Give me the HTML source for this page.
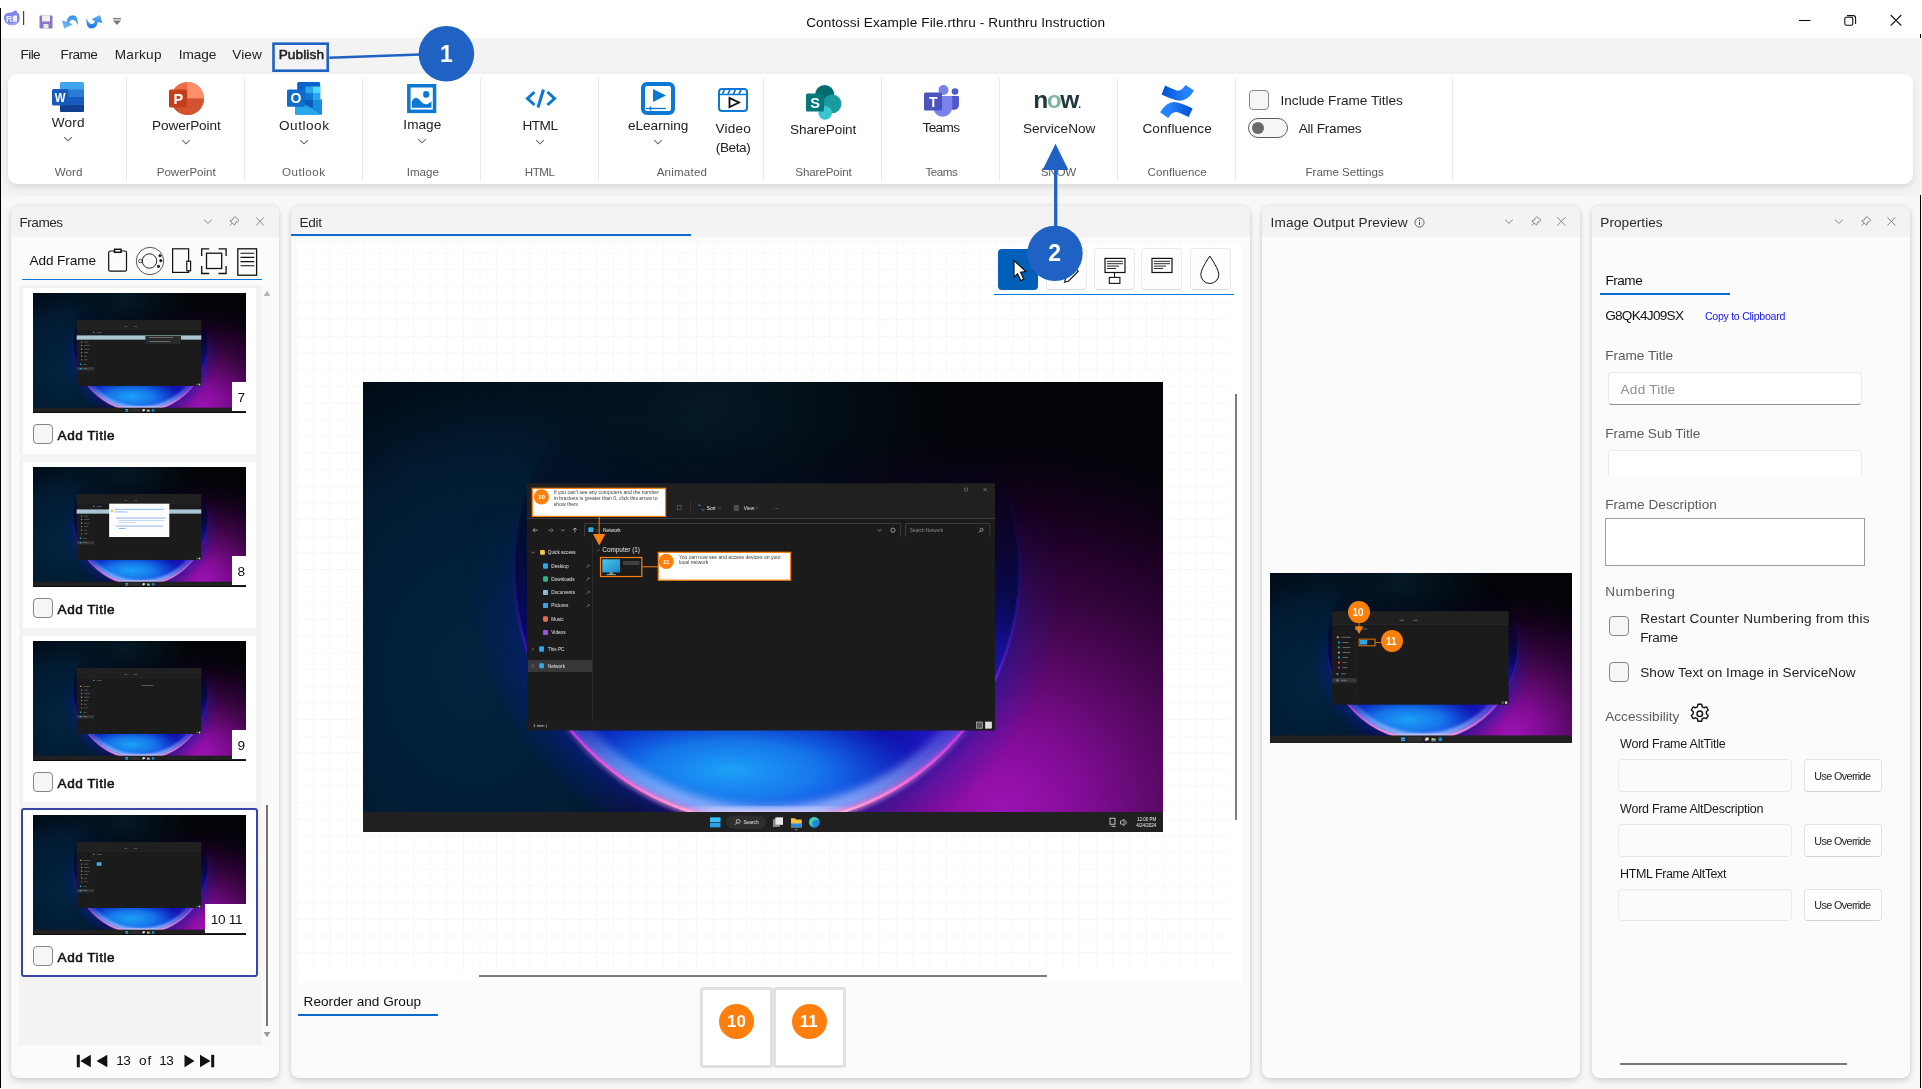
<!DOCTYPE html>
<html lang="en"><head><meta charset="utf-8"><title>Runthru Instruction</title>
<style>

*{box-sizing:border-box;margin:0;padding:0}
html,body{width:1922px;height:1089px;overflow:hidden}
body{position:relative;background:#f8f8f8;font-family:"Liberation Sans",sans-serif;color:#222}
#app{position:absolute;left:0;top:0;width:1922px;height:1089px;will-change:transform}
.a{position:absolute}
.t{position:absolute;white-space:pre;line-height:1}
.panel{position:absolute;background:#fbfbfb;border-radius:8px;box-shadow:0 2.5px 7px rgba(0,0,0,.15),0 0 4px rgba(0,0,0,.07)}
.phead{position:absolute;left:0;top:0;right:0;height:31px;background:#f3f3f3;border-radius:8px 8px 0 0}
.sep{position:absolute;top:77.5px;width:1px;height:103.5px;background:#eaeaea}
.cb{position:absolute;width:20px;height:20px;border:1px solid #868686;border-radius:4px;background:#f6f6f6}
.card{position:absolute;left:23px;width:233px;height:165.5px;background:#fff}
.wall{position:absolute;display:block}
.inp{position:absolute;background:#fdfdfd;border:1px solid #e9e9e9;border-radius:4px}
.btn{position:absolute;background:#fefefe;border:1px solid #e3e3e3;border-bottom-color:#d2d2d2;border-radius:4px}
.tool{position:absolute;top:247.800px;width:41px;height:42.600px;background:#fdfdfd;border:1px solid #ebebeb;border-bottom-color:#dcdcdc;border-radius:4px}
svg{position:absolute;overflow:visible}

</style></head>
<body>
<div id="app">
<svg width="0" height="0" style="left:0;top:0">
<defs>
<radialGradient id="gL" gradientUnits="userSpaceOnUse" cx="110" cy="290" r="340" gradientTransform="translate(110 290) scale(1 1.25) translate(-110 -290)">
 <stop offset="0" stop-color="#022440"/><stop offset=".5" stop-color="#011c34" stop-opacity=".92"/><stop offset="1" stop-color="#010a14" stop-opacity="0"/>
</radialGradient>
<radialGradient id="gT" gradientUnits="userSpaceOnUse" cx="330" cy="40" r="260">
 <stop offset="0" stop-color="#062232" stop-opacity=".75"/><stop offset="1" stop-color="#04202e" stop-opacity="0"/>
</radialGradient>
<radialGradient id="gR" gradientUnits="userSpaceOnUse" cx="640" cy="425" r="420" gradientTransform="translate(640 425) scale(1 .9) translate(-640 -425)">
 <stop offset="0" stop-color="#9c12b4"/><stop offset=".2" stop-color="#800c94"/><stop offset=".45" stop-color="#50075a" stop-opacity=".95"/><stop offset=".75" stop-color="#26002e" stop-opacity=".7"/><stop offset="1" stop-color="#140018" stop-opacity="0"/>
</radialGradient>
<linearGradient id="gOrb" gradientUnits="userSpaceOnUse" x1="0" y1="40" x2="0" y2="443">
 <stop offset="0" stop-color="#03030c" stop-opacity="0"/><stop offset=".3" stop-color="#04052a" stop-opacity=".7"/><stop offset=".5" stop-color="#050a5c"/><stop offset=".7" stop-color="#0816a8"/><stop offset=".84" stop-color="#0a2cd0"/><stop offset=".94" stop-color="#1a48e4"/><stop offset="1" stop-color="#3a60f0"/>
</linearGradient>
<radialGradient id="gHi" gradientUnits="userSpaceOnUse" cx="368" cy="388" r="190" gradientTransform="translate(368 388) scale(1 .34) translate(-368 -388)">
 <stop offset="0" stop-color="#1ca2f8"/><stop offset=".45" stop-color="#1888f0" stop-opacity=".8"/><stop offset="1" stop-color="#1060e8" stop-opacity="0"/>
</radialGradient>
<radialGradient id="gDk" gradientUnits="userSpaceOnUse" cx="520" cy="352" r="70">
 <stop offset="0" stop-color="#0a0ca0" stop-opacity=".75"/><stop offset="1" stop-color="#0a0ca0" stop-opacity="0"/>
</radialGradient>
<radialGradient id="gDk2" gradientUnits="userSpaceOnUse" cx="232" cy="362" r="45">
 <stop offset="0" stop-color="#0818a8" stop-opacity=".7"/><stop offset="1" stop-color="#0818a8" stop-opacity="0"/>
</radialGradient>
<radialGradient id="gIn" gradientUnits="userSpaceOnUse" cx="590" cy="330" r="130">
 <stop offset="0" stop-color="#3a14d0" stop-opacity=".9"/><stop offset="1" stop-color="#2a10c0" stop-opacity="0"/>
</radialGradient>
<linearGradient id="gRing" gradientUnits="userSpaceOnUse" x1="0" y1="100" x2="0" y2="443">
 <stop offset="0" stop-color="#1a1890" stop-opacity="0"/><stop offset=".3" stop-color="#3214b0" stop-opacity=".3"/><stop offset=".55" stop-color="#6a1ad0" stop-opacity=".75"/><stop offset=".72" stop-color="#c030e8"/><stop offset=".86" stop-color="#f060dc"/><stop offset=".95" stop-color="#ff9ad0"/><stop offset="1" stop-color="#ffd8ec"/>
</linearGradient>
<radialGradient id="gHalo" gradientUnits="userSpaceOnUse" cx="404" cy="189" r="300">
 <stop offset=".84" stop-color="#0a1ca8" stop-opacity=".6"/><stop offset=".9" stop-color="#0a20b0" stop-opacity=".3"/><stop offset="1" stop-color="#0a20c0" stop-opacity="0"/>
</radialGradient>
<linearGradient id="gHaloM" gradientUnits="userSpaceOnUse" x1="0" y1="120" x2="0" y2="330">
 <stop offset="0" stop-color="#000"/><stop offset="1" stop-color="#fff"/>
</linearGradient>
<mask id="mHalo" maskUnits="userSpaceOnUse" x="0" y="0" width="800" height="450"><rect width="800" height="450" fill="url(#gHaloM)"/></mask>
<linearGradient id="gRingM" gradientUnits="userSpaceOnUse" x1="0" y1="315" x2="0" y2="425"><stop offset="0" stop-color="#000"/><stop offset="1" stop-color="#fff"/></linearGradient>
<mask id="mRing" maskUnits="userSpaceOnUse" x="0" y="0" width="800" height="450"><rect width="800" height="450" fill="url(#gRingM)"/></mask>
<filter id="fb" x="-10%" y="-10%" width="120%" height="120%"><feGaussianBlur stdDeviation="4.500"/></filter>
<filter id="fb2" x="-10%" y="-10%" width="120%" height="120%"><feGaussianBlur stdDeviation="2"/></filter>
<clipPath id="co"><circle cx="404" cy="189" r="253"/></clipPath>
<clipPath id="cw"><rect width="800" height="450"/></clipPath>


</defs></svg>
<div class="a" style="left:0;top:0;width:1922px;height:38px;background:#fff"></div>
<div class="a" style="left:0;top:38px;width:1922px;height:158px;background:#f3f3f3"></div>
<div class="a" style="left:0;top:8px;width:1.200px;height:1079.500px;background:#000"></div>
<div class="a" style="left:1920.100px;top:195px;width:1.100px;height:892.500px;background:#000"></div><div class="a" style="left:1920px;top:34px;width:1.100px;height:4px;background:#000"></div>
<span class="t" style="left:806.2px;top:16.0px;font-size:13.6px;color:#111;letter-spacing:0.102px;">Contossi Example File.rthru - Runthru Instruction</span>
<svg style="left:0;top:0" width="140" height="38" viewBox="0 0 140 38">
<path d="M4 18Q3.800 13.500 9 12.800Q12 12.500 13.500 11.500Q15.500 9.800 16.300 10.800Q17 12 18.800 14Q20.500 17 19.300 21Q17.500 25 12.500 25.300Q8 25.500 5.500 22.500Q4 20.500 4 18Z" fill="#7f86ee"/>
<path d="M6 22.500Q9 25.800 13.500 25Q17.500 24 19 21Q15 24 10 23.500Q7.500 23.200 6 22.500Z" fill="#a4a8f8"/>
<text x="6" y="22" font-family="Liberation Sans, sans-serif" font-size="8.600" font-weight="700" fill="#eef0ff">R</text>
<path d="M12.700 16.800L14 15.400H17V21.800H12.700Z" fill="#f2f2ff"/>
<rect x="23" y="11" width="1.2" height="14" fill="#444"/>
<rect x="39.5" y="15.5" width="13" height="13" rx="1" fill="#8a76c4"/><rect x="42" y="15.5" width="8" height="6" fill="#f0f0f0"/><rect x="43.5" y="24" width="5" height="4.5" fill="#e8e8e8"/>
<defs><linearGradient id="ug" x1="0" y1="0" x2="0" y2="1"><stop offset="0" stop-color="#3a8ee8"/><stop offset="1" stop-color="#7cc0f4"/></linearGradient>
<linearGradient id="rg" x1="0" y1="0" x2="0" y2="1"><stop offset="0" stop-color="#1a78e8"/><stop offset="1" stop-color="#5cb0f2"/></linearGradient></defs>
<path id="undo" d="M62 20.700L66.500 21.800Q67.500 15.500 73 15.200Q78.800 15.500 77.800 26.500Q76.500 19.500 72 19.700Q69.500 20.500 69.500 22.800L72.800 24.500L64.300 28.700Z" fill="url(#ug)"/>
<path d="M62 20.700L66.500 21.800Q67.500 15.500 73 15.200Q78.800 15.500 77.800 26.500Q76.500 19.500 72 19.700Q69.500 20.500 69.500 22.800L72.800 24.500L64.300 28.700Z" fill="url(#rg)" transform="translate(24 0) rotate(180 70.150 21.850)"/>
<rect x="113" y="18" width="8" height="1.3" fill="#777"/><path d="M113 20.5h8l-4 4.5z" fill="#777"/>
</svg>
<svg style="left:1790px;top:8px" width="120" height="26" viewBox="1790 8 120 26" fill="none" stroke="#111" stroke-width="1.1">
<path d="M1799 20.5h11.5"/>
<rect x="1844.8" y="17.3" width="8" height="8" rx="1.6"/><path d="M1847 15.6h6.2a2.4 2.4 0 0 1 2.4 2.4v6"/>
<path d="M1890.7 15l10.6 10.6M1901.3 15l-10.6 10.6"/>
</svg>
<span class="t" style="left:20.6px;top:48.0px;font-size:13.6px;color:#222;letter-spacing:-0.635px;">File</span>
<span class="t" style="left:60.6px;top:48.0px;font-size:13.6px;color:#222;letter-spacing:-0.495px;">Frame</span>
<span class="t" style="left:114.7px;top:48.0px;font-size:13.6px;color:#222;letter-spacing:0.294px;">Markup</span>
<span class="t" style="left:178.7px;top:48.0px;font-size:13.6px;color:#222;letter-spacing:-0.070px;">Image</span>
<span class="t" style="left:232.3px;top:48.0px;font-size:13.6px;color:#222;letter-spacing:0.060px;">View</span>
<span class="t" style="left:278.7px;top:48.0px;font-size:13.6px;color:#222;letter-spacing:0.118px;-webkit-text-stroke:.55px #222;">Publish</span>
<div class="a" style="left:8px;top:74px;width:1905px;height:110px;background:#fff;border-radius:9px;box-shadow:0 3px 6px rgba(0,0,0,.10)"></div>
<div class="sep" style="left:126.0px"></div>
<div class="sep" style="left:244.0px"></div>
<div class="sep" style="left:362.0px"></div>
<div class="sep" style="left:480.0px"></div>
<div class="sep" style="left:598.0px"></div>
<div class="sep" style="left:763.0px"></div>
<div class="sep" style="left:881.0px"></div>
<div class="sep" style="left:999.0px"></div>
<div class="sep" style="left:1117.0px"></div>
<div class="sep" style="left:1235.0px"></div>
<div class="sep" style="left:1452.3px"></div>
<svg style="left:52px;top:82px" width="32" height="30" viewBox="0 0 32 30">
<rect x="8" y="0" width="24" height="30" rx="1.5" fill="#41a5ee"/>
<rect x="8" y="7.5" width="24" height="7.5" fill="#2b7cd3"/><rect x="8" y="15" width="24" height="7.5" fill="#185abd"/><path d="M8 22.5h24v6a1.5 1.5 0 0 1-1.5 1.5h-21a1.5 1.5 0 0 1-1.5-1.5z" fill="#103f91"/>
<rect x="0" y="7" width="16.5" height="16.5" rx="1.5" fill="#185abd"/>
<text x="2.800" y="20.200" textLength="10.800" lengthAdjust="spacingAndGlyphs" font-family="Liberation Sans, sans-serif" font-weight="700" font-size="13" fill="#fff">W</text>
</svg>
<span class="t" style="left:51.7px;top:116.0px;font-size:13.6px;color:#222;letter-spacing:0.255px;">Word</span>
<svg style="left:63px;top:136px" width="10" height="6" viewBox="0 0 10 6"><path d="M1.2 1.2L5 4.8 8.8 1.2" fill="none" stroke="#666" stroke-width="1.1"/></svg>
<span class="t" style="left:54.7px;top:166.0px;font-size:11.6px;color:#5c5c5c;letter-spacing:0.100px;">Word</span>
<svg style="left:169px;top:82px" width="35" height="33" viewBox="0 0 35 33">
<circle cx="18.5" cy="16.5" r="16.5" fill="#ed6c47"/>
<path d="M18.5 0a16.5 16.5 0 0 1 16.5 16.5h-16.5z" fill="#ff8f6b"/>
<path d="M35 16.5a16.5 16.5 0 0 1-33 0z" fill="#d35230"/>
<rect x="0" y="7.5" width="18" height="18" rx="1.5" fill="#c43e1c"/>
<text x="9.300" y="21.800" text-anchor="middle" font-family="Liberation Sans, sans-serif" font-weight="700" font-size="14.500" fill="#fff">P</text>
</svg>
<span class="t" style="left:152.0px;top:119.0px;font-size:13.6px;color:#222;letter-spacing:-0.080px;">PowerPoint</span>
<svg style="left:181.3px;top:139px" width="10" height="6" viewBox="0 0 10 6"><path d="M1.2 1.2L5 4.8 8.8 1.2" fill="none" stroke="#666" stroke-width="1.1"/></svg>
<span class="t" style="left:156.7px;top:166.0px;font-size:11.6px;color:#5c5c5c;letter-spacing:-0.033px;">PowerPoint</span>
<svg style="left:280px;top:78px" width="50" height="42" viewBox="280 78 50 42">
<rect x="297.200" y="82" width="23" height="30" rx="1.500" fill="#0a64c8"/>
<rect x="305.500" y="86.500" width="7.500" height="7" fill="#28a8ea"/><rect x="313" y="86.500" width="7.200" height="7" fill="#50d9ff"/>
<rect x="305.500" y="93.500" width="7.500" height="6.500" fill="#0f78d4"/><rect x="313" y="93.500" width="7.200" height="6.500" fill="#28a8ea"/>
<rect x="305.500" y="100" width="7.500" height="11" fill="#0a5cbd"/><rect x="313" y="100" width="7.200" height="8" fill="#1490df"/>
<path d="M295 102.500L309 110.500L322 98.400V113.200a1.500 1.500 0 0 1-1.500 1.500h-24a1.500 1.500 0 0 1-1.500-1.500z" fill="#1490df"/>
<path d="M295 103.500V113.200a1.500 1.500 0 0 0 1.500 1.500h24q1 0 1.400-.800L305 104.500z" fill="#28a8ea"/>
<path d="M304.500 104.200L322 113.900" stroke="#0f78d4" stroke-width=".800" fill="none"/>
<rect x="287" y="89.500" width="17.800" height="17.300" rx="1.500" fill="#0f6cc8"/>
<text x="295.900" y="103.300" text-anchor="middle" font-family="Liberation Sans, sans-serif" font-weight="700" font-size="14" fill="#fff">O</text>
</svg>
<span class="t" style="left:279.0px;top:119.0px;font-size:13.6px;color:#222;letter-spacing:0.523px;">Outlook</span>
<svg style="left:299.2px;top:139px" width="10" height="6" viewBox="0 0 10 6"><path d="M1.2 1.2L5 4.8 8.8 1.2" fill="none" stroke="#666" stroke-width="1.1"/></svg>
<span class="t" style="left:282.0px;top:166.0px;font-size:11.6px;color:#5c5c5c;letter-spacing:0.505px;">Outlook</span>
<svg style="left:400px;top:80px" width="44" height="38" viewBox="400 80 44 38">
<rect x="408.850" y="85.750" width="25.700" height="25.600" fill="#fff" stroke="#0a78d4" stroke-width="3.500"/>
<path d="M411.800 107.700V101.500Q414.500 96.500 417.500 98.300Q419.500 99.500 421.500 102Q424.500 105.500 428 103.800Q430 102.800 431.500 101.200V107.700Z" fill="#0a78d4"/>
<circle cx="426" cy="94.400" r="3.300" fill="#0a78d4"/><path d="M423.300 92.400a3.400 3.400 0 0 0 0 4.200" stroke="#fff" stroke-width=".900" fill="none"/>
</svg>
<span class="t" style="left:403.3px;top:118.0px;font-size:13.6px;color:#222;letter-spacing:0.055px;">Image</span>
<svg style="left:417.2px;top:137.7px" width="10" height="6" viewBox="0 0 10 6"><path d="M1.2 1.2L5 4.8 8.8 1.2" fill="none" stroke="#666" stroke-width="1.1"/></svg>
<span class="t" style="left:406.7px;top:166.0px;font-size:11.6px;color:#5c5c5c;letter-spacing:0.016px;">Image</span>
<svg style="left:524.7px;top:89px" width="32" height="19" viewBox="0 0 32 19" fill="none" stroke="#0a78d4" stroke-width="3">
<path d="M9.5 3L2.5 9.5l7 6.500M22.500 3l7 6.500-7 6.500M18.500 .5l-5.500 18"/>
</svg>
<span class="t" style="left:522.5px;top:119.0px;font-size:13.6px;color:#222;letter-spacing:-0.505px;">HTML</span>
<svg style="left:535.2px;top:139px" width="10" height="6" viewBox="0 0 10 6"><path d="M1.2 1.2L5 4.8 8.8 1.2" fill="none" stroke="#666" stroke-width="1.1"/></svg>
<span class="t" style="left:524.7px;top:166.0px;font-size:11.6px;color:#5c5c5c;letter-spacing:-0.421px;">HTML</span>
<svg style="left:641px;top:82px" width="34" height="33" viewBox="0 0 34 33">
<rect x="2" y="2" width="30" height="29" rx="4" fill="#fff" stroke="#0a78d4" stroke-width="4"/>
<path d="M12 7v13l13-6.500z" fill="#0a78d4"/><path d="M5 26.500h20" stroke="#0a78d4" stroke-width="1.3"/><path d="M9.500 24.500v4" stroke="#0a78d4" stroke-width="1.600"/>
</svg>
<span class="t" style="left:628.0px;top:119.0px;font-size:13.6px;color:#222;letter-spacing:-0.021px;">eLearning</span>
<svg style="left:653px;top:139px" width="10" height="6" viewBox="0 0 10 6"><path d="M1.2 1.2L5 4.8 8.8 1.2" fill="none" stroke="#666" stroke-width="1.1"/></svg>
<svg style="left:717.5px;top:88px" width="30" height="24" viewBox="0 0 30 24" fill="none">
<rect x="1" y="1" width="28" height="22" rx="3" fill="#fff" stroke="#0a78d4" stroke-width="2"/>
<path d="M1 6.500h28" stroke="#0a78d4" stroke-width="1.500"/>
<path d="M6.500 1.500l-2 4.500M12 1.500l-2 4.500M17.500 1.500l-2 4.500M23 1.500l-2 4.500" stroke="#0a78d4" stroke-width="1.800"/>
<path d="M11.500 10v9l9.500-4.500z" stroke="#111" stroke-width="1.800"/>
</svg>
<span class="t" style="left:715.5px;top:122.0px;font-size:13.6px;color:#222;letter-spacing:0.192px;">Video</span>
<span class="t" style="left:715.8px;top:141.0px;font-size:13.6px;color:#222;letter-spacing:-0.406px;">(Beta)</span>
<span class="t" style="left:656.7px;top:166.0px;font-size:11.6px;color:#5c5c5c;letter-spacing:0.188px;">Animated</span>
<svg style="left:805.8px;top:84.7px" width="36" height="35" viewBox="0 0 36 35">
<circle cx="18.700" cy="9.500" r="9.500" fill="#036c70"/>
<circle cx="26.200" cy="18.800" r="9.300" fill="#1a9ba1"/>
<circle cx="19.200" cy="27.800" r="6.900" fill="#37c6d0"/>
<rect x="0" y="8.600" width="18" height="18" rx="1.500" fill="#03787c"/>
<text x="9.200" y="22.900" text-anchor="middle" font-family="Liberation Sans, sans-serif" font-weight="700" font-size="14.500" fill="#fff">S</text>
</svg>
<span class="t" style="left:790.0px;top:123.0px;font-size:13.6px;color:#222;letter-spacing:-0.107px;">SharePoint</span>
<span class="t" style="left:795.3px;top:166.0px;font-size:11.6px;color:#5c5c5c;letter-spacing:-0.108px;">SharePoint</span>
<svg style="left:924px;top:85px" width="35" height="32" viewBox="0 0 35 32">
<circle cx="31" cy="6.500" r="3.300" fill="#5059c9"/>
<path d="M25 11h9a1 1 0 0 1 1 1v8a5 5 0 0 1-10 0z" fill="#5059c9"/>
<circle cx="19.500" cy="5" r="5" fill="#7b83eb"/>
<path d="M10 11h17a1.200 1.200 0 0 1 1.200 1.200v10a9.500 9.500 0 0 1-19 0v-10a1.200 1.200 0 0 1 .800-1.200z" fill="#7b83eb"/>
<rect x="0" y="7.500" width="18" height="18" rx="1.500" fill="#4b53bc"/>
<text x="9.200" y="21.700" text-anchor="middle" font-family="Liberation Sans, sans-serif" font-weight="700" font-size="14" fill="#fff">T</text>
</svg>
<span class="t" style="left:922.5px;top:121.0px;font-size:13.6px;color:#222;letter-spacing:-0.637px;">Teams</span>
<span class="t" style="left:925.5px;top:166.0px;font-size:11.6px;color:#5c5c5c;letter-spacing:-0.464px;">Teams</span>
<svg style="left:1033px;top:90px" width="52" height="20" viewBox="0 0 52 20">
<text x="0.300" y="18" font-family="Liberation Sans, sans-serif" font-weight="700" font-size="24.500" letter-spacing="-1.500" fill="#22383f">n<tspan fill="#81b5a1">o</tspan>w<tspan font-size="10" dx="0.500">.</tspan></text>
</svg>
<span class="t" style="left:1023.0px;top:122.0px;font-size:13.6px;color:#222;letter-spacing:-0.026px;">ServiceNow</span>
<span class="t" style="left:1040.8px;top:166.0px;font-size:11.6px;color:#5c5c5c;letter-spacing:-0.193px;">SNOW</span>
<svg style="left:1150px;top:78px" width="55" height="45" viewBox="0 0 55 45">
<defs><linearGradient id="cf1" x1="0" y1="0" x2="1" y2="0"><stop offset="0" stop-color="#0050d0"/><stop offset=".7" stop-color="#2480fc"/><stop offset="1" stop-color="#2684ff"/></linearGradient>
<linearGradient id="cf2" x1="1" y1="0" x2="0" y2="0"><stop offset="0" stop-color="#0050d0"/><stop offset=".7" stop-color="#2480fc"/><stop offset="1" stop-color="#2684ff"/></linearGradient></defs>
<path d="M15.100 7.400Q23 11 26 12.300Q31 14 35.500 7L44 12.400Q38 22.500 30 22.700Q24 22.500 11.600 16.500Z" fill="url(#cf1)"/>
<path d="M10.100 34.300Q16 24 24 23.900Q30 24 42.600 30.400L38.600 39Q30 35 27.500 34.200Q22.500 32.500 18.200 39.900Z" fill="url(#cf2)"/>
</svg>
<span class="t" style="left:1142.5px;top:122.0px;font-size:13.6px;color:#222;letter-spacing:0.047px;">Confluence</span>
<span class="t" style="left:1147.5px;top:166.0px;font-size:11.6px;color:#5c5c5c;letter-spacing:0.060px;">Confluence</span>
<div class="cb" style="left:1249.2px;top:90px"></div>
<span class="t" style="left:1280.5px;top:94.0px;font-size:13.6px;color:#222;">Include Frame Titles</span>
<div class="a" style="left:1248.3px;top:118px;width:40px;height:20px;border:1px solid #5e5e5e;border-radius:10px;background:#f7f7f7"></div>
<div class="a" style="left:1251.5px;top:122px;width:12px;height:12px;border-radius:6px;background:#6a6a6a"></div>
<span class="t" style="left:1298.7px;top:122.0px;font-size:13.6px;color:#222;letter-spacing:-0.219px;">All Frames</span>
<span class="t" style="left:1305.5px;top:166.0px;font-size:11.6px;color:#5c5c5c;letter-spacing:-0.031px;">Frame Settings</span>
<div class="panel" style="left:11px;top:205.7px;width:268px;height:872.5px"><div class="phead"></div></div>
<span class="t" style="left:19.6px;top:216.0px;font-size:13.6px;color:#2a2a2a;letter-spacing:-0.536px;">Frames</span>
<svg style="left:204px;top:216.7px" width="70" height="10" viewBox="0 0 70 10" fill="none" stroke="#868686" stroke-width="1">
<path d="M0 2.700l3.900 3.700L7.900 2.700"/>
<g transform="translate(25.5,0)" stroke-linejoin="round"><path d="M5.400 -.300L9.500 3.300L8.100 4.700L6.500 4.900L5.100 8.100L.4 4L3.400 2.600L3.700 1.100ZM2.700 6.100L.3 8.600"/></g>
<g transform="translate(52,0)"><path d="M0 .300l8 8.200M8 .300L0 8.500"/></g>
</svg>
<span class="t" style="left:29.4px;top:254.0px;font-size:13.6px;color:#111;letter-spacing:-0.069px;">Add Frame</span>
<svg style="left:100px;top:244px" width="165" height="36" viewBox="100 244 165 36" fill="none" stroke="#111" stroke-width="1">
<rect x="108.700" y="251" width="17.800" height="20.200" rx="1.500" stroke-width="1.200"/><rect x="114.500" y="249.300" width="6.500" height="3" fill="#fff" stroke-width="1.500"/>
<circle cx="150" cy="261" r="13.700" stroke-width=".700"/><circle cx="149.500" cy="261" r="7.200" stroke-width=".900"/><circle cx="140.400" cy="261" r="1.800" stroke-width=".700"/>
<circle cx="160" cy="255.800" r="1.100" fill="#111"/><circle cx="160.800" cy="260.700" r="1.100" fill="#111"/><circle cx="158.500" cy="266.400" r="1.100" fill="#111"/>
<rect x="172.600" y="248.800" width="16" height="23.600" stroke-width="1.200"/><rect x="186.800" y="261.200" width="3.800" height="9.600" fill="#fff" stroke-width="1.200"/>
<path d="M201.700 256v-7.200h7.500M218.500 248.800h7.600v7.200M226.100 266v7.500h-7.600M209.200 273.500h-7.500v-7.500" stroke-width="1.300"/><rect x="206.500" y="253.200" width="15.200" height="15.300" stroke-width="1.300"/>
<rect x="237.800" y="248.800" width="18.800" height="26.400" stroke-width="1.300"/><path d="M240.500 253.200h13.800M240.500 257.400h13.800M240.500 261.600h13.800M240.500 265.800h13.800" stroke-width="1.100"/>
</svg>
<div class="a" style="left:22.200px;top:278.500px;width:240px;height:1.500px;background:#0a78d4"></div>
<div class="a" style="left:19.300px;top:284.500px;width:241.500px;height:760px;background:#f3f3f3"></div>
<div class="a" style="left:260.800px;top:284.500px;width:10.200px;height:760px;background:#f9f9f9;border-radius:0 5px 5px 0"></div>
<svg style="left:263px;top:289.500px" width="8" height="7"><path d="M4 .800l3.400 5.200h-6.800z" fill="#b5b5b5"/></svg>
<svg style="left:263px;top:1031px" width="8" height="7"><path d="M4 6.200L.6 1h6.800z" fill="#9a9a9a"/></svg>
<div class="a" style="left:266.200px;top:805px;width:1.600px;height:220.500px;background:#777"></div>
<div class="card" style="top:288.3px"></div>
<svg class="wall" style="left:33px;top:293px" width="213" height="120" viewBox="0 0 800 450" preserveAspectRatio="none"><g clip-path="url(#cw)">
 <rect width="800" height="450" fill="#020408"/>
 <rect width="800" height="450" fill="url(#gT)"/>
 <rect width="800" height="450" fill="url(#gL)"/>
 <rect width="800" height="450" fill="url(#gR)"/>
 <circle cx="404" cy="189" r="300" fill="url(#gHalo)" mask="url(#mHalo)"/>
 <circle cx="404" cy="189" r="253" fill="url(#gOrb)"/>
 <circle cx="404" cy="189" r="253" fill="url(#gIn)"/>
 <circle cx="404" cy="189" r="253" fill="url(#gDk)"/>
 <circle cx="404" cy="189" r="253" fill="url(#gDk2)"/>
 <circle cx="404" cy="189" r="253" fill="url(#gHi)"/>
 <circle cx="404" cy="189" r="243" fill="none" stroke="#b8c6ff" stroke-opacity=".7" stroke-width="15" mask="url(#mRing)" filter="url(#fb)"/>
 <g clip-path="url(#co)"><ellipse cx="404" cy="434" rx="105" ry="8" fill="#e8dcff" fill-opacity=".85" filter="url(#fb)"/></g>
 <circle cx="404" cy="189" r="252" fill="none" stroke="#ff8ad8" stroke-opacity=".65" stroke-width="8" mask="url(#mRing)" filter="url(#fb2)"/>
 <circle cx="404" cy="189" r="252.500" fill="none" stroke="url(#gRing)" stroke-width="2.800"/>
 <rect y="430" width="800" height="20" fill="#202020"/>
 <rect x="164" y="101.500" width="468" height="247" fill="#1b1b1b"/>
 <rect x="164" y="101.500" width="468" height="35" fill="#202020"/>
 <rect x="164" y="136" width="468" height=".900" fill="#3a3a3a"/>
 <rect x="229.200" y="159" width=".800" height="180" fill="#2c2c2c"/>
 <rect x="165" y="278" width="64" height="12" fill="#383838"/>
 <g id="sbi">
 <rect x="177.200" y="168" width="4.400" height="4.400" fill="#f7c948"/>
 <rect x="180.200" y="181.600" width="4.600" height="5" rx=".8" fill="#2aa8e8"/><rect x="180.200" y="194.500" width="4.600" height="5" rx=".8" fill="#28b48c"/>
 <rect x="180.200" y="208" width="4.600" height="5" rx=".8" fill="#9ab4d8"/><rect x="180.200" y="221.100" width="4.600" height="5" rx=".8" fill="#3aa0f0"/>
 <rect x="180.200" y="234.400" width="4.600" height="5" rx=".8" fill="#e86a50"/><rect x="180.200" y="248" width="4.600" height="5" rx=".8" fill="#9a50e0"/>
 <rect x="176.300" y="264.600" width="4.600" height="5" rx=".8" fill="#2aa8e8"/><rect x="176.300" y="281.300" width="4.600" height="5" rx=".8" fill="#38a8e8"/>
 <rect x="225.500" y="145.500" width="4.800" height="4.600" rx=".8" fill="#38a8e8"/>
 </g>
 <rect x="347" y="435.600" width="10.300" height="4.400" fill="#3ac0f8"/><rect x="347" y="440.800" width="10.300" height="4.400" fill="#28a0f0"/>
 <rect x="363.200" y="433.700" width="39.800" height="12.900" rx="6.400" fill="#2e2e2e"/>
 <rect x="410" y="437.500" width="7" height="7.200" fill="#8a8a8a"/><rect x="412.500" y="435.600" width="7.500" height="7" fill="#e8e8e8"/>
 <path d="M428 436.500h4l1 1.300h5.500v7.400h-10.500z" fill="#f5c13c"/><rect x="428" y="441.500" width="10.500" height="3.700" fill="#2a8ae0"/>
 <circle cx="451.200" cy="440.300" r="5.300" fill="#1a8ad8"/>
 <rect x="613.500" y="340" width="6" height="6.200" fill="#5a5a5a"/><rect x="622.500" y="340" width="6" height="6.200" fill="#ddd"/>
 </g><g fill="#9a9a9a" opacity=".7"><rect x="188.500" y="169" width="26" height="2.200"/><rect x="192" y="183" width="16" height="2.200"/><rect x="192" y="196" width="21" height="2.200"/><rect x="192" y="209.500" width="21" height="2.200"/><rect x="192" y="222.600" width="15" height="2.200"/><rect x="192" y="235.900" width="11" height="2.200"/><rect x="192" y="249.500" width="13" height="2.200"/><rect x="188.500" y="266" width="13" height="2.200"/><rect x="188.500" y="282.800" width="15" height="2.200"/><rect x="240" y="147" width="18" height="2.200"/><rect x="343" y="124" width="11" height="2.200"/><rect x="380" y="124" width="11" height="2.200"/></g></svg>
<svg class="wall" style="left:33px;top:293px" width="213" height="120" viewBox="0 0 800 450" preserveAspectRatio="none"><rect x="164" y="159" width="468" height="16" fill="#a9c6d2"/><rect x="422" y="161" width="134" height="30" fill="#2b2b2b"/><rect x="436" y="166" width="90" height="2.500" fill="#8a8a8a"/><rect x="436" y="180" width="80" height="2.500" fill="#8a8a8a"/></svg>
<div class="a" style="left:33px;top:412px;width:213px;height:1px;background:#0c0c0c"></div>
<div class="a" style="left:232px;top:382px;width:14px;height:29px;background:#fff"></div>
<span class="t" style="left:237.5px;top:391.0px;font-size:13.6px;color:#111;">7</span>
<div class="cb" style="left:33.200px;top:424.3px;width:19.500px;height:19.500px"></div>
<span class="t" style="left:57.6px;top:429.0px;font-size:13.6px;color:#111;letter-spacing:0.499px;-webkit-text-stroke:.55px #111;">Add Title</span>
<div class="card" style="top:462.3px"></div>
<svg class="wall" style="left:33px;top:467px" width="213" height="120" viewBox="0 0 800 450" preserveAspectRatio="none"><g clip-path="url(#cw)">
 <rect width="800" height="450" fill="#020408"/>
 <rect width="800" height="450" fill="url(#gT)"/>
 <rect width="800" height="450" fill="url(#gL)"/>
 <rect width="800" height="450" fill="url(#gR)"/>
 <circle cx="404" cy="189" r="300" fill="url(#gHalo)" mask="url(#mHalo)"/>
 <circle cx="404" cy="189" r="253" fill="url(#gOrb)"/>
 <circle cx="404" cy="189" r="253" fill="url(#gIn)"/>
 <circle cx="404" cy="189" r="253" fill="url(#gDk)"/>
 <circle cx="404" cy="189" r="253" fill="url(#gDk2)"/>
 <circle cx="404" cy="189" r="253" fill="url(#gHi)"/>
 <circle cx="404" cy="189" r="243" fill="none" stroke="#b8c6ff" stroke-opacity=".7" stroke-width="15" mask="url(#mRing)" filter="url(#fb)"/>
 <g clip-path="url(#co)"><ellipse cx="404" cy="434" rx="105" ry="8" fill="#e8dcff" fill-opacity=".85" filter="url(#fb)"/></g>
 <circle cx="404" cy="189" r="252" fill="none" stroke="#ff8ad8" stroke-opacity=".65" stroke-width="8" mask="url(#mRing)" filter="url(#fb2)"/>
 <circle cx="404" cy="189" r="252.500" fill="none" stroke="url(#gRing)" stroke-width="2.800"/>
 <rect y="430" width="800" height="20" fill="#202020"/>
 <rect x="164" y="101.500" width="468" height="247" fill="#1b1b1b"/>
 <rect x="164" y="101.500" width="468" height="35" fill="#202020"/>
 <rect x="164" y="136" width="468" height=".900" fill="#3a3a3a"/>
 <rect x="229.200" y="159" width=".800" height="180" fill="#2c2c2c"/>
 <rect x="165" y="278" width="64" height="12" fill="#383838"/>
 <g id="sbi">
 <rect x="177.200" y="168" width="4.400" height="4.400" fill="#f7c948"/>
 <rect x="180.200" y="181.600" width="4.600" height="5" rx=".8" fill="#2aa8e8"/><rect x="180.200" y="194.500" width="4.600" height="5" rx=".8" fill="#28b48c"/>
 <rect x="180.200" y="208" width="4.600" height="5" rx=".8" fill="#9ab4d8"/><rect x="180.200" y="221.100" width="4.600" height="5" rx=".8" fill="#3aa0f0"/>
 <rect x="180.200" y="234.400" width="4.600" height="5" rx=".8" fill="#e86a50"/><rect x="180.200" y="248" width="4.600" height="5" rx=".8" fill="#9a50e0"/>
 <rect x="176.300" y="264.600" width="4.600" height="5" rx=".8" fill="#2aa8e8"/><rect x="176.300" y="281.300" width="4.600" height="5" rx=".8" fill="#38a8e8"/>
 <rect x="225.500" y="145.500" width="4.800" height="4.600" rx=".8" fill="#38a8e8"/>
 </g>
 <rect x="347" y="435.600" width="10.300" height="4.400" fill="#3ac0f8"/><rect x="347" y="440.800" width="10.300" height="4.400" fill="#28a0f0"/>
 <rect x="363.200" y="433.700" width="39.800" height="12.900" rx="6.400" fill="#2e2e2e"/>
 <rect x="410" y="437.500" width="7" height="7.200" fill="#8a8a8a"/><rect x="412.500" y="435.600" width="7.500" height="7" fill="#e8e8e8"/>
 <path d="M428 436.500h4l1 1.300h5.500v7.400h-10.500z" fill="#f5c13c"/><rect x="428" y="441.500" width="10.500" height="3.700" fill="#2a8ae0"/>
 <circle cx="451.200" cy="440.300" r="5.300" fill="#1a8ad8"/>
 <rect x="613.500" y="340" width="6" height="6.200" fill="#5a5a5a"/><rect x="622.500" y="340" width="6" height="6.200" fill="#ddd"/>
 </g><g fill="#9a9a9a" opacity=".7"><rect x="188.500" y="169" width="26" height="2.200"/><rect x="192" y="183" width="16" height="2.200"/><rect x="192" y="196" width="21" height="2.200"/><rect x="192" y="209.500" width="21" height="2.200"/><rect x="192" y="222.600" width="15" height="2.200"/><rect x="192" y="235.900" width="11" height="2.200"/><rect x="192" y="249.500" width="13" height="2.200"/><rect x="188.500" y="266" width="13" height="2.200"/><rect x="188.500" y="282.800" width="15" height="2.200"/><rect x="240" y="147" width="18" height="2.200"/><rect x="343" y="124" width="11" height="2.200"/><rect x="380" y="124" width="11" height="2.200"/></g></svg>
<svg class="wall" style="left:33px;top:467px" width="213" height="120" viewBox="0 0 800 450" preserveAspectRatio="none"><rect x="164" y="159" width="468" height="16" fill="#a9c6d2"/><rect x="286" y="137.500" width="226" height="125" fill="#fdfdfd"/><g fill="#4a86d8" opacity=".75"><rect x="306" y="157" width="185" height="3"/><rect x="306" y="167" width="48" height="3"/><rect x="312" y="190" width="186" height="3"/><rect x="322" y="199" width="170" height="2.500" opacity=".6"/><rect x="322" y="206" width="66" height="2.500" opacity=".6"/><rect x="312" y="220" width="176" height="3"/><rect x="322" y="229" width="26" height="3"/></g><rect x="292" y="160" width="9" height="9" fill="#e8c84a"/></svg>
<div class="a" style="left:33px;top:586px;width:213px;height:1px;background:#0c0c0c"></div>
<div class="a" style="left:232px;top:556px;width:14px;height:29px;background:#fff"></div>
<span class="t" style="left:237.5px;top:565.0px;font-size:13.6px;color:#111;">8</span>
<div class="cb" style="left:33.200px;top:598.3px;width:19.500px;height:19.500px"></div>
<span class="t" style="left:57.6px;top:603.0px;font-size:13.6px;color:#111;letter-spacing:0.499px;-webkit-text-stroke:.55px #111;">Add Title</span>
<div class="card" style="top:636.3px"></div>
<svg class="wall" style="left:33px;top:641px" width="213" height="120" viewBox="0 0 800 450" preserveAspectRatio="none"><g clip-path="url(#cw)">
 <rect width="800" height="450" fill="#020408"/>
 <rect width="800" height="450" fill="url(#gT)"/>
 <rect width="800" height="450" fill="url(#gL)"/>
 <rect width="800" height="450" fill="url(#gR)"/>
 <circle cx="404" cy="189" r="300" fill="url(#gHalo)" mask="url(#mHalo)"/>
 <circle cx="404" cy="189" r="253" fill="url(#gOrb)"/>
 <circle cx="404" cy="189" r="253" fill="url(#gIn)"/>
 <circle cx="404" cy="189" r="253" fill="url(#gDk)"/>
 <circle cx="404" cy="189" r="253" fill="url(#gDk2)"/>
 <circle cx="404" cy="189" r="253" fill="url(#gHi)"/>
 <circle cx="404" cy="189" r="243" fill="none" stroke="#b8c6ff" stroke-opacity=".7" stroke-width="15" mask="url(#mRing)" filter="url(#fb)"/>
 <g clip-path="url(#co)"><ellipse cx="404" cy="434" rx="105" ry="8" fill="#e8dcff" fill-opacity=".85" filter="url(#fb)"/></g>
 <circle cx="404" cy="189" r="252" fill="none" stroke="#ff8ad8" stroke-opacity=".65" stroke-width="8" mask="url(#mRing)" filter="url(#fb2)"/>
 <circle cx="404" cy="189" r="252.500" fill="none" stroke="url(#gRing)" stroke-width="2.800"/>
 <rect y="430" width="800" height="20" fill="#202020"/>
 <rect x="164" y="101.500" width="468" height="247" fill="#1b1b1b"/>
 <rect x="164" y="101.500" width="468" height="35" fill="#202020"/>
 <rect x="164" y="136" width="468" height=".900" fill="#3a3a3a"/>
 <rect x="229.200" y="159" width=".800" height="180" fill="#2c2c2c"/>
 <rect x="165" y="278" width="64" height="12" fill="#383838"/>
 <g id="sbi">
 <rect x="177.200" y="168" width="4.400" height="4.400" fill="#f7c948"/>
 <rect x="180.200" y="181.600" width="4.600" height="5" rx=".8" fill="#2aa8e8"/><rect x="180.200" y="194.500" width="4.600" height="5" rx=".8" fill="#28b48c"/>
 <rect x="180.200" y="208" width="4.600" height="5" rx=".8" fill="#9ab4d8"/><rect x="180.200" y="221.100" width="4.600" height="5" rx=".8" fill="#3aa0f0"/>
 <rect x="180.200" y="234.400" width="4.600" height="5" rx=".8" fill="#e86a50"/><rect x="180.200" y="248" width="4.600" height="5" rx=".8" fill="#9a50e0"/>
 <rect x="176.300" y="264.600" width="4.600" height="5" rx=".8" fill="#2aa8e8"/><rect x="176.300" y="281.300" width="4.600" height="5" rx=".8" fill="#38a8e8"/>
 <rect x="225.500" y="145.500" width="4.800" height="4.600" rx=".8" fill="#38a8e8"/>
 </g>
 <rect x="347" y="435.600" width="10.300" height="4.400" fill="#3ac0f8"/><rect x="347" y="440.800" width="10.300" height="4.400" fill="#28a0f0"/>
 <rect x="363.200" y="433.700" width="39.800" height="12.900" rx="6.400" fill="#2e2e2e"/>
 <rect x="410" y="437.500" width="7" height="7.200" fill="#8a8a8a"/><rect x="412.500" y="435.600" width="7.500" height="7" fill="#e8e8e8"/>
 <path d="M428 436.500h4l1 1.300h5.500v7.400h-10.500z" fill="#f5c13c"/><rect x="428" y="441.500" width="10.500" height="3.700" fill="#2a8ae0"/>
 <circle cx="451.200" cy="440.300" r="5.300" fill="#1a8ad8"/>
 <rect x="613.500" y="340" width="6" height="6.200" fill="#5a5a5a"/><rect x="622.500" y="340" width="6" height="6.200" fill="#ddd"/>
 </g><g fill="#9a9a9a" opacity=".7"><rect x="188.500" y="169" width="26" height="2.200"/><rect x="192" y="183" width="16" height="2.200"/><rect x="192" y="196" width="21" height="2.200"/><rect x="192" y="209.500" width="21" height="2.200"/><rect x="192" y="222.600" width="15" height="2.200"/><rect x="192" y="235.900" width="11" height="2.200"/><rect x="192" y="249.500" width="13" height="2.200"/><rect x="188.500" y="266" width="13" height="2.200"/><rect x="188.500" y="282.800" width="15" height="2.200"/><rect x="240" y="147" width="18" height="2.200"/><rect x="343" y="124" width="11" height="2.200"/><rect x="380" y="124" width="11" height="2.200"/></g></svg>
<svg class="wall" style="left:33px;top:641px" width="213" height="120" viewBox="0 0 800 450" preserveAspectRatio="none"><rect x="408" y="165" width="44" height="3" fill="#6a6a6a"/></svg>
<div class="a" style="left:33px;top:760px;width:213px;height:1px;background:#0c0c0c"></div>
<div class="a" style="left:232px;top:730px;width:14px;height:29px;background:#fff"></div>
<span class="t" style="left:237.5px;top:739.0px;font-size:13.6px;color:#111;">9</span>
<div class="cb" style="left:33.200px;top:772.3px;width:19.500px;height:19.500px"></div>
<span class="t" style="left:57.6px;top:777.0px;font-size:13.6px;color:#111;letter-spacing:0.499px;-webkit-text-stroke:.55px #111;">Add Title</span>
<div class="a" style="left:21.300px;top:808.4px;width:236.400px;height:169px;background:#fff;border:2px solid #3b45a8;border-radius:3px"></div>
<svg class="wall" style="left:33px;top:815px" width="213" height="120" viewBox="0 0 800 450" preserveAspectRatio="none"><g clip-path="url(#cw)">
 <rect width="800" height="450" fill="#020408"/>
 <rect width="800" height="450" fill="url(#gT)"/>
 <rect width="800" height="450" fill="url(#gL)"/>
 <rect width="800" height="450" fill="url(#gR)"/>
 <circle cx="404" cy="189" r="300" fill="url(#gHalo)" mask="url(#mHalo)"/>
 <circle cx="404" cy="189" r="253" fill="url(#gOrb)"/>
 <circle cx="404" cy="189" r="253" fill="url(#gIn)"/>
 <circle cx="404" cy="189" r="253" fill="url(#gDk)"/>
 <circle cx="404" cy="189" r="253" fill="url(#gDk2)"/>
 <circle cx="404" cy="189" r="253" fill="url(#gHi)"/>
 <circle cx="404" cy="189" r="243" fill="none" stroke="#b8c6ff" stroke-opacity=".7" stroke-width="15" mask="url(#mRing)" filter="url(#fb)"/>
 <g clip-path="url(#co)"><ellipse cx="404" cy="434" rx="105" ry="8" fill="#e8dcff" fill-opacity=".85" filter="url(#fb)"/></g>
 <circle cx="404" cy="189" r="252" fill="none" stroke="#ff8ad8" stroke-opacity=".65" stroke-width="8" mask="url(#mRing)" filter="url(#fb2)"/>
 <circle cx="404" cy="189" r="252.500" fill="none" stroke="url(#gRing)" stroke-width="2.800"/>
 <rect y="430" width="800" height="20" fill="#202020"/>
 <rect x="164" y="101.500" width="468" height="247" fill="#1b1b1b"/>
 <rect x="164" y="101.500" width="468" height="35" fill="#202020"/>
 <rect x="164" y="136" width="468" height=".900" fill="#3a3a3a"/>
 <rect x="229.200" y="159" width=".800" height="180" fill="#2c2c2c"/>
 <rect x="165" y="278" width="64" height="12" fill="#383838"/>
 <g id="sbi">
 <rect x="177.200" y="168" width="4.400" height="4.400" fill="#f7c948"/>
 <rect x="180.200" y="181.600" width="4.600" height="5" rx=".8" fill="#2aa8e8"/><rect x="180.200" y="194.500" width="4.600" height="5" rx=".8" fill="#28b48c"/>
 <rect x="180.200" y="208" width="4.600" height="5" rx=".8" fill="#9ab4d8"/><rect x="180.200" y="221.100" width="4.600" height="5" rx=".8" fill="#3aa0f0"/>
 <rect x="180.200" y="234.400" width="4.600" height="5" rx=".8" fill="#e86a50"/><rect x="180.200" y="248" width="4.600" height="5" rx=".8" fill="#9a50e0"/>
 <rect x="176.300" y="264.600" width="4.600" height="5" rx=".8" fill="#2aa8e8"/><rect x="176.300" y="281.300" width="4.600" height="5" rx=".8" fill="#38a8e8"/>
 <rect x="225.500" y="145.500" width="4.800" height="4.600" rx=".8" fill="#38a8e8"/>
 </g>
 <rect x="347" y="435.600" width="10.300" height="4.400" fill="#3ac0f8"/><rect x="347" y="440.800" width="10.300" height="4.400" fill="#28a0f0"/>
 <rect x="363.200" y="433.700" width="39.800" height="12.900" rx="6.400" fill="#2e2e2e"/>
 <rect x="410" y="437.500" width="7" height="7.200" fill="#8a8a8a"/><rect x="412.500" y="435.600" width="7.500" height="7" fill="#e8e8e8"/>
 <path d="M428 436.500h4l1 1.300h5.500v7.400h-10.500z" fill="#f5c13c"/><rect x="428" y="441.500" width="10.500" height="3.700" fill="#2a8ae0"/>
 <circle cx="451.200" cy="440.300" r="5.300" fill="#1a8ad8"/>
 <rect x="613.500" y="340" width="6" height="6.200" fill="#5a5a5a"/><rect x="622.500" y="340" width="6" height="6.200" fill="#ddd"/>
 </g><g fill="#9a9a9a" opacity=".7"><rect x="188.500" y="169" width="26" height="2.200"/><rect x="192" y="183" width="16" height="2.200"/><rect x="192" y="196" width="21" height="2.200"/><rect x="192" y="209.500" width="21" height="2.200"/><rect x="192" y="222.600" width="15" height="2.200"/><rect x="192" y="235.900" width="11" height="2.200"/><rect x="192" y="249.500" width="13" height="2.200"/><rect x="188.500" y="266" width="13" height="2.200"/><rect x="188.500" y="282.800" width="15" height="2.200"/><rect x="240" y="147" width="18" height="2.200"/><rect x="343" y="124" width="11" height="2.200"/><rect x="380" y="124" width="11" height="2.200"/></g></svg>
<svg class="wall" style="left:33px;top:815px" width="213" height="120" viewBox="0 0 800 450" preserveAspectRatio="none"><rect x="239.300" y="177.300" width="17.700" height="13.100" fill="#3ab4e8"/></svg>
<div class="a" style="left:33px;top:934px;width:213px;height:1px;background:#0c0c0c"></div>
<div class="a" style="left:205.3px;top:904px;width:40.69999999999999px;height:29px;background:#fff"></div>
<span class="t" style="left:210.8px;top:913.0px;font-size:13.6px;color:#111;letter-spacing:-0.304px;">10 11</span>
<div class="cb" style="left:33.200px;top:946.3px;width:19.500px;height:19.500px"></div>
<span class="t" style="left:57.6px;top:951.0px;font-size:13.6px;color:#111;letter-spacing:0.499px;-webkit-text-stroke:.55px #111;">Add Title</span>
<svg style="left:76px;top:1054px" width="140" height="14" viewBox="76 1054 140 14" fill="#111">
<rect x="76.800" y="1054.800" width="3" height="12.500"/><path d="M90.800 1054.800v12.500l-10.500-6.250z"/>
<path d="M107.300 1054.800v12.500l-10.800-6.250z"/>
<path d="M184.500 1054.800v12.500l10-6.250z"/>
<path d="M200 1054.800v12.500l10.500-6.250z"/><rect x="211.200" y="1054.800" width="3" height="12.500"/>
</svg>
<span class="t" style="left:116.3px;top:1054.0px;font-size:13.6px;color:#111;letter-spacing:-.6px;">13</span>
<span class="t" style="left:139.0px;top:1054.0px;font-size:13.6px;color:#111;letter-spacing:0.956px;">of</span>
<span class="t" style="left:159.2px;top:1054.0px;font-size:13.6px;color:#111;letter-spacing:-.6px;">13</span>
<div class="panel" style="left:291px;top:205.500px;width:959.300px;height:872.500px"><div class="phead"></div></div>
<span class="t" style="left:299.5px;top:216.0px;font-size:13.6px;color:#2a2a2a;letter-spacing:-0.279px;">Edit</span>
<div class="a" style="left:291px;top:234px;width:400px;height:2.300px;background:#0a6cd0"></div>
<div class="a" style="left:297.700px;top:244.400px;width:944.700px;height:738.600px;background:#fff"></div>
<div class="a" style="left:297.700px;top:244.400px;width:931.300px;height:724.600px;background-color:#fff;
background-image:linear-gradient(to right,#f7f7f7 1px,transparent 1px),linear-gradient(to bottom,#f7f7f7 1px,transparent 1px);
background-size:16.667px 16.667px;background-position:-1.700px 8.600px"></div>
<div class="a" style="left:1235.100px;top:394px;width:2.100px;height:426px;background:#7c7c7c"></div>
<div class="a" style="left:478.800px;top:974.900px;width:568.600px;height:2.100px;background:#7c7c7c"></div>
<svg class="wall" style="left:363px;top:382px" width="800" height="450" viewBox="0 0 800 450" preserveAspectRatio="none"><g clip-path="url(#cw)">
 <rect width="800" height="450" fill="#020408"/>
 <rect width="800" height="450" fill="url(#gT)"/>
 <rect width="800" height="450" fill="url(#gL)"/>
 <rect width="800" height="450" fill="url(#gR)"/>
 <circle cx="404" cy="189" r="300" fill="url(#gHalo)" mask="url(#mHalo)"/>
 <circle cx="404" cy="189" r="253" fill="url(#gOrb)"/>
 <circle cx="404" cy="189" r="253" fill="url(#gIn)"/>
 <circle cx="404" cy="189" r="253" fill="url(#gDk)"/>
 <circle cx="404" cy="189" r="253" fill="url(#gDk2)"/>
 <circle cx="404" cy="189" r="253" fill="url(#gHi)"/>
 <circle cx="404" cy="189" r="243" fill="none" stroke="#b8c6ff" stroke-opacity=".7" stroke-width="15" mask="url(#mRing)" filter="url(#fb)"/>
 <g clip-path="url(#co)"><ellipse cx="404" cy="434" rx="105" ry="8" fill="#e8dcff" fill-opacity=".85" filter="url(#fb)"/></g>
 <circle cx="404" cy="189" r="252" fill="none" stroke="#ff8ad8" stroke-opacity=".65" stroke-width="8" mask="url(#mRing)" filter="url(#fb2)"/>
 <circle cx="404" cy="189" r="252.500" fill="none" stroke="url(#gRing)" stroke-width="2.800"/>
 <rect y="430" width="800" height="20" fill="#202020"/>
 <rect x="164" y="101.500" width="468" height="247" fill="#1b1b1b"/>
 <rect x="164" y="101.500" width="468" height="35" fill="#202020"/>
 <rect x="164" y="136" width="468" height=".900" fill="#3a3a3a"/>
 <rect x="229.200" y="159" width=".800" height="180" fill="#2c2c2c"/>
 <rect x="165" y="278" width="64" height="12" fill="#383838"/>
 <g id="sbi">
 <rect x="177.200" y="168" width="4.400" height="4.400" fill="#f7c948"/>
 <rect x="180.200" y="181.600" width="4.600" height="5" rx=".8" fill="#2aa8e8"/><rect x="180.200" y="194.500" width="4.600" height="5" rx=".8" fill="#28b48c"/>
 <rect x="180.200" y="208" width="4.600" height="5" rx=".8" fill="#9ab4d8"/><rect x="180.200" y="221.100" width="4.600" height="5" rx=".8" fill="#3aa0f0"/>
 <rect x="180.200" y="234.400" width="4.600" height="5" rx=".8" fill="#e86a50"/><rect x="180.200" y="248" width="4.600" height="5" rx=".8" fill="#9a50e0"/>
 <rect x="176.300" y="264.600" width="4.600" height="5" rx=".8" fill="#2aa8e8"/><rect x="176.300" y="281.300" width="4.600" height="5" rx=".8" fill="#38a8e8"/>
 <rect x="225.500" y="145.500" width="4.800" height="4.600" rx=".8" fill="#38a8e8"/>
 </g>
 <rect x="347" y="435.600" width="10.300" height="4.400" fill="#3ac0f8"/><rect x="347" y="440.800" width="10.300" height="4.400" fill="#28a0f0"/>
 <rect x="363.200" y="433.700" width="39.800" height="12.900" rx="6.400" fill="#2e2e2e"/>
 <rect x="410" y="437.500" width="7" height="7.200" fill="#8a8a8a"/><rect x="412.500" y="435.600" width="7.500" height="7" fill="#e8e8e8"/>
 <path d="M428 436.500h4l1 1.300h5.500v7.400h-10.500z" fill="#f5c13c"/><rect x="428" y="441.500" width="10.500" height="3.700" fill="#2a8ae0"/>
 <circle cx="451.200" cy="440.300" r="5.300" fill="#1a8ad8"/>
 <rect x="613.500" y="340" width="6" height="6.200" fill="#5a5a5a"/><rect x="622.500" y="340" width="6" height="6.200" fill="#ddd"/>
 </g></svg>
<svg style="left:363px;top:382px" width="800" height="450" viewBox="363 382 800 450" font-family="Liberation Sans, sans-serif">
<!-- window chrome -->
<rect x="526.400" y="518" width="468.600" height=".800" fill="#3a3a3a"/>
<rect x="592.200" y="541" width=".700" height="180" fill="#2c2c2c"/>
<rect x="526.400" y="721" width="468.600" height="9" fill="#1d1d1d"/>
<path d="M964.500 488h3v3h-3z" fill="none" stroke="#8a8a8a" stroke-width=".500"/>
<path d="M983.500 488l3.200 3.200M986.700 488l-3.200 3.200" stroke="#9a9a9a" stroke-width=".600"/>
<rect x="677.500" y="505.500" width="3.600" height="4.400" fill="none" stroke="#6a6a6a" stroke-width=".600"/>
<rect x="690.400" y="501" width=".600" height="13" fill="#3c3c3c"/>
<path d="M698 506l1.500-1.500 1.500 1.500M701.500 509l1.500 1.500 1.500-1.500" fill="none" stroke="#4ab0e8" stroke-width=".700"/>
<text x="706.800" y="509.600" font-size="4.800" fill="#e8e8e8">Sort</text><path d="M718.500 507.300l1.200 1.200 1.200-1.200" fill="none" stroke="#aaa" stroke-width=".500"/>
<path d="M733.800 506h5M733.800 508h5M733.800 510h5" stroke="#b8b8b8" stroke-width=".600"/>
<text x="743.800" y="509.600" font-size="4.800" fill="#e8e8e8">View</text><path d="M755.500 507.300l1.200 1.200 1.200-1.200" fill="none" stroke="#aaa" stroke-width=".500"/>
<text x="773.500" y="509" font-size="5.500" fill="#ddd" letter-spacing=".400">...</text>
<!-- nav row -->
<g fill="none" stroke="#c8c8c8" stroke-width=".700">
<path d="M538 530.200h-5M535 528.200l-2 2 2 2"/><path d="M548 530.200h5M551 528.200l2 2-2 2" stroke="#8a8a8a"/>
<path d="M561.300 529.500l1.500 1.500 1.500-1.500"/><path d="M574.900 532.500v-4.500M573 530l1.900-2 1.900 2"/>
<path d="M877.800 529.500l1.600 1.600 1.600-1.600"/><circle cx="893" cy="530.200" r="2.100"/>
</g>
<path d="M584.600 536.600v-13.100h315.800v13.100" fill="none" stroke="#4a4a4a" stroke-width=".700"/>
<path d="M905.600 536.600v-13.100h84.200v13.100" fill="none" stroke="#4a4a4a" stroke-width=".700"/>
<rect x="588.500" y="527.500" width="4.800" height="4.600" rx=".800" fill="#38a8e8"/>
<path d="M596.500 529.200l1.300 1.300-1.300 1.300" fill="none" stroke="#bbb" stroke-width=".500"/>
<text x="603" y="531.900" font-size="4.800" fill="#efefef">Network</text>
<text x="909.700" y="531.900" font-size="4.700" fill="#8a8a8a">Search Network</text>
<circle cx="981.600" cy="529.700" r="1.500" fill="none" stroke="#ccc" stroke-width=".600"/><path d="M980.500 530.900l-1.700 1.700" stroke="#ccc" stroke-width=".700"/>
<!-- sidebar -->
<path d="M531.500 551.700l1.500 1.500 1.500-1.500" fill="none" stroke="#aaa" stroke-width=".600"/><path d="M542.700 549.500l1 2 2.100.200-1.600 1.500.450 2.100-1.950-1.050-1.950 1.050.450-2.100-1.600-1.500 2.100-.200z" fill="#f7c948"/><text x="547.800" y="554.400" font-size="4.700" fill="#e4e4e4">Quick access</text><rect x="543.2" y="563.6" width="4.600" height="5" rx=".800" fill="#2aa8e8"/><text x="551.3" y="567.9000000000001" font-size="4.700" fill="#e4e4e4">Desktop</text><path d="M586.5 567.7l2.600-2.600M588 564.4000000000001l1.700 1.700" stroke="#9a9a9a" stroke-width=".700"/><rect x="543.2" y="576.5" width="4.600" height="5" rx=".800" fill="#28b48c"/><text x="551.3" y="580.8000000000001" font-size="4.700" fill="#e4e4e4">Downloads</text><path d="M586.5 580.6l2.600-2.600M588 577.3000000000001l1.700 1.700" stroke="#9a9a9a" stroke-width=".700"/><rect x="543.2" y="590.0" width="4.600" height="5" rx=".800" fill="#9ab4d8"/><text x="551.3" y="594.3000000000001" font-size="4.700" fill="#e4e4e4">Documents</text><path d="M586.5 594.1l2.600-2.600M588 590.8000000000001l1.700 1.700" stroke="#9a9a9a" stroke-width=".700"/><rect x="543.2" y="603.1" width="4.600" height="5" rx=".800" fill="#3aa0f0"/><text x="551.3" y="607.4000000000001" font-size="4.700" fill="#e4e4e4">Pictures</text><path d="M586.5 607.2l2.600-2.600M588 603.9000000000001l1.700 1.700" stroke="#9a9a9a" stroke-width=".700"/><rect x="543.2" y="616.4" width="4.600" height="5" rx=".800" fill="#e86a50"/><text x="551.3" y="620.7" font-size="4.700" fill="#e4e4e4">Music</text><rect x="543.2" y="630.0" width="4.600" height="5" rx=".800" fill="#9a50e0"/><text x="551.3" y="634.3000000000001" font-size="4.700" fill="#e4e4e4">Videos</text><rect x="539.3" y="646.6" width="4.600" height="5" rx=".800" fill="#2aa8e8"/><text x="547.8" y="650.9000000000001" font-size="4.700" fill="#e4e4e4">This PC</text><path d="M532 647.7l1.500 1.500-1.500 1.500" fill="none" stroke="#aaa" stroke-width=".600"/><rect x="528" y="660" width="64" height="12" fill="#383838"/><rect x="539.3" y="663.3" width="4.600" height="5" rx=".800" fill="#38a8e8"/><text x="547.8" y="667.6" font-size="4.700" fill="#e4e4e4">Network</text><path d="M532 664.4l1.500 1.500-1.500 1.500" fill="none" stroke="#aaa" stroke-width=".600"/>
<!-- content -->
<path d="M597 549.500l1.400 1.400 1.400-1.400" fill="none" stroke="#999" stroke-width=".500"/>
<text x="602.300" y="551.700" font-size="6.400" fill="#e6e6e6">Computer (1)</text>
<text x="533.200" y="727.300" font-size="4.200" fill="#cfcfcf">1 item  |</text>
<rect x="976.500" y="722" width="6" height="6.200" fill="#5a5a5a" stroke="#ccc" stroke-width=".600"/><rect x="985.500" y="722" width="6" height="6.200" fill="#ddd" stroke="#eee" stroke-width=".600"/>
<!-- taskbar -->
<rect x="710" y="817.600" width="10.300" height="4.400" fill="#3ac0f8"/><rect x="710" y="822.800" width="10.300" height="4.400" fill="#28a0f0"/>
<rect x="726.200" y="815.700" width="39.800" height="12.900" rx="6.400" fill="#2e2e2e"/>
<circle cx="738.200" cy="821.300" r="1.900" fill="none" stroke="#eee" stroke-width=".700"/><path d="M736.800 822.800l-1.700 1.800" stroke="#eee" stroke-width=".800"/>
<text x="743.400" y="823.900" font-size="4.800" fill="#e8e8e8">Search</text>
<rect x="773" y="819.500" width="7" height="7.200" fill="#8a8a8a"/><rect x="775.500" y="817.600" width="7.500" height="7" fill="#e8e8e8"/>
<path d="M791 818.500h4l1 1.300h5.500v7.400h-10.500z" fill="#f5c13c"/><rect x="791" y="823.500" width="10.500" height="3.700" fill="#2a8ae0"/><rect x="795" y="829.300" width="2.500" height=".800" fill="#aaa"/>
<circle cx="814.200" cy="822.300" r="5.300" fill="#1a8ad8"/><path d="M809.500 824a5 5 0 0 1 9.500-3.500q-4-2-6.500 1.200-1.200 2.500 1.500 4.800-3.300-.200-4.500-2.500z" fill="#4ad0a0"/>
<rect x="1110" y="818.200" width="5" height="6" fill="none" stroke="#e8e8e8" stroke-width=".800"/><path d="M1111.500 826.300h4" stroke="#e8e8e8" stroke-width=".800"/>
<path d="M1120.500 821v3h1.500l2 1.800v-6.600l-2 1.800zM1125.500 820.500q1.500 2 0 4" fill="none" stroke="#e8e8e8" stroke-width=".700"/>
<text x="1156.300" y="820.800" font-size="4.500" fill="#f2f2f2" text-anchor="end">12:00 PM</text>
<text x="1156.300" y="827.200" font-size="4.500" fill="#f2f2f2" text-anchor="end">4/24/2024</text>
<!-- annotations -->
<rect x="532.300" y="488.300" width="133.300" height="28.100" fill="#fff" stroke="#fb800e" stroke-width="1.200"/>
<path d="M534 514.800h15" stroke="#e4e4e4" stroke-width=".800"/>
<circle cx="541.400" cy="496.900" r="7.600" fill="#fb800e"/>
<text x="541.400" y="499.200" font-size="6.200" font-weight="700" fill="#fff" text-anchor="middle">10</text>
<text font-size="5.050" fill="#3a3a3a"><tspan x="553.800" y="493.900">If you can't see any computers and the number</tspan><tspan x="553.800" y="499.900">in brackets is greater than 0, click this arrow to</tspan><tspan x="553.800" y="505.900">show them</tspan></text>
<path d="M599.200 516.500v20" stroke="#fb800e" stroke-width="1"/>
<path d="M593 534h12.400l-6.200 11.600z" fill="#fb800e"/>
<rect x="600.500" y="557.500" width="41.300" height="19" fill="none" stroke="#fb800e" stroke-width="1.200"/>
<path d="M641.800 566.800h16.500" stroke="#fb800e" stroke-width="1"/>
<rect x="658.300" y="552.300" width="132.300" height="27.900" fill="#fff" stroke="#fb800e" stroke-width="1.200"/>
<path d="M660 578.600h15" stroke="#e4e4e4" stroke-width=".800"/>
<circle cx="666.200" cy="561.400" r="7.600" fill="#fb800e"/>
<text x="666.200" y="563.700" font-size="6.200" font-weight="700" fill="#fff" text-anchor="middle">11</text>
<text font-size="5.050" fill="#3a3a3a"><tspan x="678.900" y="558.600">You can now see and access devices on your</tspan><tspan x="678.900" y="563.700">local network</tspan></text>
<defs><linearGradient id="pcg" x1="0" y1="0" x2="1" y2="1"><stop offset="0" stop-color="#4cc8f0"/><stop offset="1" stop-color="#1a88c8"/></linearGradient></defs>
<rect x="602.300" y="559.300" width="17.700" height="13.100" fill="url(#pcg)"/><rect x="609.500" y="572.400" width="3.300" height="1.800" fill="#8aa"/><rect x="606.500" y="574.200" width="9.300" height=".900" fill="#9bb"/>
<rect x="623" y="561" width="16.500" height="4" fill="#4a4a4a" opacity=".8"/>
</svg>
<div class="a" style="left:998px;top:249.200px;width:39.700px;height:40.500px;background:#005fb8;border-radius:4px"></div>
<div class="tool" style="left:1045.6px"></div>
<div class="tool" style="left:1093.6px"></div>
<div class="tool" style="left:1141.4px"></div>
<div class="tool" style="left:1189.6px"></div>
<svg style="left:990px;top:245px" width="250" height="50" viewBox="990 245 250 50" fill="none" stroke="#111" stroke-width="1">
<path d="M1014 260.500V277.200L1017.500 273.800L1020.800 280.600L1023.800 279.200L1020.600 272.200L1025.900 271.600Z" fill="#fff" stroke="#111" stroke-width="1.200" stroke-linejoin="miter"/>
<rect x="1105" y="258.400" width="20" height="14.100" stroke-width="1.200"/><path d="M1107 261.300h16M1107 263.700h16M1107 266.100h12M1107 268.500h9" stroke-width=".900"/><path d="M1114.500 272.500v5"/><rect x="1109.300" y="277.400" width="10.600" height="6" stroke-width="1.100"/>
<rect x="1152" y="258.400" width="20" height="14.100" stroke-width="1.200"/><path d="M1154 261.300h16M1154 263.700h16M1154 266.100h12M1154 268.500h9" stroke-width=".900"/>
<path d="M1209.800 256q9 13.500 9 18.500a9 9 0 0 1-18 0q0-5 9-18.500z" stroke-width="1"/>
<path d="M1064.500 282.300l1.200-4.300 9.600-9.800 3 3-9.600 9.800z" stroke-width="1.100"/>
</svg>
<div class="a" style="left:994px;top:293.500px;width:240px;height:1.500px;background:#0a78d4"></div>
<span class="t" style="left:303.6px;top:995.0px;font-size:13.6px;color:#111;letter-spacing:0.022px;">Reorder and Group</span>
<div class="a" style="left:298px;top:1014px;width:140px;height:2px;background:#0a6cd0"></div>
<div class="a" style="left:700.1px;top:987px;width:72.800px;height:80.800px;background:#e1e1e1;border-radius:3px"></div>
<div class="a" style="left:702.9px;top:989.900px;width:67.200px;height:75px;background:#fff"></div>
<div class="a" style="left:718.9px;top:1003.800px;width:35.200px;height:35.200px;border-radius:50%;background:#ff7f0e"></div>
<div class="a" style="left:773.2px;top:987px;width:72.800px;height:80.800px;background:#e1e1e1;border-radius:3px"></div>
<div class="a" style="left:776.0px;top:989.900px;width:67.200px;height:75px;background:#fff"></div>
<div class="a" style="left:791.9px;top:1003.800px;width:35.200px;height:35.200px;border-radius:50%;background:#ff7f0e"></div>
<span class="t" style="left:727.1px;top:1014.0px;font-size:16.9px;color:#fff;font-weight:700;">10</span>
<span class="t" style="left:799.8px;top:1014.0px;font-size:16.9px;color:#fff;font-weight:700;">11</span>
<div class="panel" style="left:1261.700px;top:205.500px;width:318.700px;height:872.500px"><div class="phead"></div></div>
<span class="t" style="left:1270.6px;top:216.0px;font-size:13.6px;color:#2a2a2a;letter-spacing:0.132px;">Image Output Preview</span>
<svg style="left:1413.500px;top:216.600px" width="11" height="11" viewBox="0 0 11 11" fill="none" stroke="#555" stroke-width=".900"><circle cx="5.500" cy="5.500" r="4.600"/><path d="M5.500 4.800v3.200" stroke-width="1.100"/><circle cx="5.500" cy="3.200" r=".600" fill="#333" stroke="none"/></svg>
<svg style="left:1504.5px;top:216.7px" width="70" height="10" viewBox="0 0 70 10" fill="none" stroke="#868686" stroke-width="1">
<path d="M0 2.700l3.900 3.700L7.900 2.700"/>
<g transform="translate(26.5,0)" stroke-linejoin="round"><path d="M5.400 -.300L9.500 3.300L8.100 4.700L6.500 4.900L5.100 8.100L.4 4L3.400 2.600L3.700 1.100ZM2.700 6.100L.3 8.600"/></g>
<g transform="translate(52.299999999999955,0)"><path d="M0 .300l8 8.200M8 .300L0 8.500"/></g>
</svg>
<svg class="wall" style="left:1270px;top:573px" width="302" height="170" viewBox="0 0 800 450" preserveAspectRatio="none"><g clip-path="url(#cw)">
 <rect width="800" height="450" fill="#020408"/>
 <rect width="800" height="450" fill="url(#gT)"/>
 <rect width="800" height="450" fill="url(#gL)"/>
 <rect width="800" height="450" fill="url(#gR)"/>
 <circle cx="404" cy="189" r="300" fill="url(#gHalo)" mask="url(#mHalo)"/>
 <circle cx="404" cy="189" r="253" fill="url(#gOrb)"/>
 <circle cx="404" cy="189" r="253" fill="url(#gIn)"/>
 <circle cx="404" cy="189" r="253" fill="url(#gDk)"/>
 <circle cx="404" cy="189" r="253" fill="url(#gDk2)"/>
 <circle cx="404" cy="189" r="253" fill="url(#gHi)"/>
 <circle cx="404" cy="189" r="243" fill="none" stroke="#b8c6ff" stroke-opacity=".7" stroke-width="15" mask="url(#mRing)" filter="url(#fb)"/>
 <g clip-path="url(#co)"><ellipse cx="404" cy="434" rx="105" ry="8" fill="#e8dcff" fill-opacity=".85" filter="url(#fb)"/></g>
 <circle cx="404" cy="189" r="252" fill="none" stroke="#ff8ad8" stroke-opacity=".65" stroke-width="8" mask="url(#mRing)" filter="url(#fb2)"/>
 <circle cx="404" cy="189" r="252.500" fill="none" stroke="url(#gRing)" stroke-width="2.800"/>
 <rect y="430" width="800" height="20" fill="#202020"/>
 <rect x="164" y="101.500" width="468" height="247" fill="#1b1b1b"/>
 <rect x="164" y="101.500" width="468" height="35" fill="#202020"/>
 <rect x="164" y="136" width="468" height=".900" fill="#3a3a3a"/>
 <rect x="229.200" y="159" width=".800" height="180" fill="#2c2c2c"/>
 <rect x="165" y="278" width="64" height="12" fill="#383838"/>
 <g id="sbi">
 <rect x="177.200" y="168" width="4.400" height="4.400" fill="#f7c948"/>
 <rect x="180.200" y="181.600" width="4.600" height="5" rx=".8" fill="#2aa8e8"/><rect x="180.200" y="194.500" width="4.600" height="5" rx=".8" fill="#28b48c"/>
 <rect x="180.200" y="208" width="4.600" height="5" rx=".8" fill="#9ab4d8"/><rect x="180.200" y="221.100" width="4.600" height="5" rx=".8" fill="#3aa0f0"/>
 <rect x="180.200" y="234.400" width="4.600" height="5" rx=".8" fill="#e86a50"/><rect x="180.200" y="248" width="4.600" height="5" rx=".8" fill="#9a50e0"/>
 <rect x="176.300" y="264.600" width="4.600" height="5" rx=".8" fill="#2aa8e8"/><rect x="176.300" y="281.300" width="4.600" height="5" rx=".8" fill="#38a8e8"/>
 <rect x="225.500" y="145.500" width="4.800" height="4.600" rx=".8" fill="#38a8e8"/>
 </g>
 <rect x="347" y="435.600" width="10.300" height="4.400" fill="#3ac0f8"/><rect x="347" y="440.800" width="10.300" height="4.400" fill="#28a0f0"/>
 <rect x="363.200" y="433.700" width="39.800" height="12.900" rx="6.400" fill="#2e2e2e"/>
 <rect x="410" y="437.500" width="7" height="7.200" fill="#8a8a8a"/><rect x="412.500" y="435.600" width="7.500" height="7" fill="#e8e8e8"/>
 <path d="M428 436.500h4l1 1.300h5.500v7.400h-10.500z" fill="#f5c13c"/><rect x="428" y="441.500" width="10.500" height="3.700" fill="#2a8ae0"/>
 <circle cx="451.200" cy="440.300" r="5.300" fill="#1a8ad8"/>
 <rect x="613.500" y="340" width="6" height="6.200" fill="#5a5a5a"/><rect x="622.500" y="340" width="6" height="6.200" fill="#ddd"/>
 </g><g fill="#9a9a9a" opacity=".7"><rect x="188.500" y="169" width="26" height="2.200"/><rect x="192" y="183" width="16" height="2.200"/><rect x="192" y="196" width="21" height="2.200"/><rect x="192" y="209.500" width="21" height="2.200"/><rect x="192" y="222.600" width="15" height="2.200"/><rect x="192" y="235.900" width="11" height="2.200"/><rect x="192" y="249.500" width="13" height="2.200"/><rect x="188.500" y="266" width="13" height="2.200"/><rect x="188.500" y="282.800" width="15" height="2.200"/><rect x="240" y="147" width="18" height="2.200"/><rect x="343" y="124" width="11" height="2.200"/><rect x="380" y="124" width="11" height="2.200"/></g></svg>
<svg style="left:1270px;top:573px" width="302" height="170" viewBox="1270 573 302 170">
<path d="M1359 622v6" stroke="#fb800e" stroke-width=".800"/>
<path d="M1354.800 626.200h8.400l-4.200 7.900z" fill="#fb800e"/>
<rect x="1359.100" y="639.100" width="15.900" height="6.700" fill="none" stroke="#fb800e" stroke-width=".900"/>
<rect x="1360" y="640" width="7" height="4.600" fill="#2aa8e0"/>
<path d="M1375 642.500h7" stroke="#fb800e" stroke-width=".800"/>
<circle cx="1359" cy="612.100" r="11" fill="#fb800e"/>
<circle cx="1392" cy="641" r="11" fill="#fb800e"/>
</svg>
<span class="t" style="left:1352.4px;top:608.0px;font-size:10px;color:#fff;font-weight:700;">10</span>
<span class="t" style="left:1386.0px;top:637.0px;font-size:10px;color:#fff;font-weight:700;">11</span>
<div class="panel" style="left:1592px;top:205.500px;width:318.200px;height:872.500px"><div class="phead"></div></div>
<span class="t" style="left:1600.3px;top:216.0px;font-size:13.6px;color:#2a2a2a;letter-spacing:0.037px;">Properties</span>
<svg style="left:1834.6px;top:216.7px" width="70" height="10" viewBox="0 0 70 10" fill="none" stroke="#868686" stroke-width="1">
<path d="M0 2.700l3.900 3.700L7.900 2.700"/>
<g transform="translate(26.40000000000009,0)" stroke-linejoin="round"><path d="M5.400 -.300L9.500 3.300L8.100 4.700L6.500 4.900L5.100 8.100L.4 4L3.400 2.600L3.700 1.100ZM2.700 6.100L.3 8.600"/></g>
<g transform="translate(52.40000000000009,0)"><path d="M0 .300l8 8.200M8 .300L0 8.500"/></g>
</svg>
<span class="t" style="left:1605.6px;top:274.0px;font-size:13.6px;color:#111;letter-spacing:-0.545px;">Frame</span>
<div class="a" style="left:1600px;top:293px;width:130px;height:2.200px;background:#0a6cd0"></div>
<span class="t" style="left:1605.2px;top:309.0px;font-size:13.6px;color:#111;letter-spacing:-0.732px;">G8QK4J09SX</span>
<span class="t" style="left:1704.9px;top:311.0px;font-size:10.6px;color:#1515f2;letter-spacing:-0.275px;">Copy to Clipboard</span>
<span class="t" style="left:1605.2px;top:349.0px;font-size:13.6px;color:#5c5c5c;letter-spacing:-0.018px;">Frame Title</span>
<div class="inp" style="left:1608.200px;top:372.300px;width:253.700px;height:32.400px;background:#fff;border-bottom-color:#8f8f8f"></div>
<span class="t" style="left:1620.6px;top:383.0px;font-size:13.6px;color:#8d8d8d;letter-spacing:0.212px;">Add Title</span>
<span class="t" style="left:1605.2px;top:427.0px;font-size:13.6px;color:#5c5c5c;letter-spacing:-0.061px;">Frame Sub Title</span>
<div class="inp" style="left:1608.200px;top:450px;width:253.700px;height:25.700px;background:#fff;border-bottom:none;border-radius:4px 4px 0 0"></div>
<span class="t" style="left:1605.2px;top:498.0px;font-size:13.6px;color:#5c5c5c;letter-spacing:0.035px;">Frame Description</span>
<div class="a" style="left:1605px;top:517.800px;width:260px;height:48.200px;background:#fff;border:1px solid #989ca6"></div>
<span class="t" style="left:1605.2px;top:585.0px;font-size:13.6px;color:#5c5c5c;letter-spacing:0.387px;">Numbering</span>
<div class="cb" style="left:1609.400px;top:616.200px;width:19.400px;height:19.400px"></div>
<span class="t" style="left:1640.2px;top:612.0px;font-size:13.6px;color:#222;letter-spacing:0.214px;">Restart Counter Numbering from this</span>
<span class="t" style="left:1640.2px;top:631.0px;font-size:13.6px;color:#222;letter-spacing:-0.370px;">Frame</span>
<div class="cb" style="left:1609.400px;top:662.400px;width:19.400px;height:19.400px"></div>
<span class="t" style="left:1640.2px;top:666.0px;font-size:13.6px;color:#222;letter-spacing:0.059px;">Show Text on Image in ServiceNow</span>
<span class="t" style="left:1605.2px;top:710.0px;font-size:13.6px;color:#5c5c5c;letter-spacing:0.014px;">Accessibility</span>
<svg style="left:1688.700px;top:702.500px" width="21.600" height="21.600" viewBox="0 0 20 20" fill="none" stroke="#111" stroke-width="1.300">
<path d="M8.300 1.200h3.400l.500 2.300 1.700.900 2.200-.800 1.700 2.900-1.700 1.600v1.900l1.700 1.600-1.700 2.900-2.200-.800-1.700.900-.500 2.300h-3.400l-.500-2.300-1.700-.900-2.200.800-1.700-2.900 1.700-1.600v-1.900l-1.700-1.600 1.700-2.900 2.200.800 1.700-.900z" stroke-linejoin="round"/>
<circle cx="10" cy="10" r="2.600"/></svg>
<span class="t" style="left:1620.1px;top:738.0px;font-size:12.5px;color:#1a1a1a;letter-spacing:-0.231px;">Word Frame AltTitle</span>
<div class="inp" style="left:1618.200px;top:759.4px;width:173.400px;height:32.300px;background:#fbfbfb"></div>
<div class="btn" style="left:1803.500px;top:759.4px;width:78.300px;height:32.300px"></div>
<span class="t" style="left:1814.3px;top:771.0px;font-size:10.8px;color:#222;letter-spacing:-0.628px;">Use Override</span>
<span class="t" style="left:1620.1px;top:803.0px;font-size:12.5px;color:#1a1a1a;letter-spacing:-0.243px;">Word Frame AltDescription</span>
<div class="inp" style="left:1618.200px;top:824.3px;width:173.400px;height:32.300px;background:#fbfbfb"></div>
<div class="btn" style="left:1803.500px;top:824.3px;width:78.300px;height:32.300px"></div>
<span class="t" style="left:1814.3px;top:836.0px;font-size:10.8px;color:#222;letter-spacing:-0.628px;">Use Override</span>
<span class="t" style="left:1620.1px;top:868.0px;font-size:12.5px;color:#1a1a1a;letter-spacing:-0.421px;">HTML Frame AltText</span>
<div class="inp" style="left:1618.200px;top:889.0px;width:173.400px;height:32.300px;background:#fbfbfb"></div>
<div class="btn" style="left:1803.500px;top:889.0px;width:78.300px;height:32.300px"></div>
<span class="t" style="left:1814.3px;top:900.0px;font-size:10.8px;color:#222;letter-spacing:-0.628px;">Use Override</span>
<div class="a" style="left:1619.600px;top:1063px;width:227.300px;height:1.800px;background:#777"></div>
<svg style="left:0;top:0" width="1922" height="400" viewBox="0 0 1922 400">
<rect x="273.500" y="43.700" width="54.200" height="27" fill="none" stroke="#2062c4" stroke-width="2.600"/>
<path d="M329.300 57.700L420 54.500" stroke="#2062c4" stroke-width="2.400"/>
<circle cx="446.400" cy="53.800" r="27.800" fill="#2062c4"/>
<path d="M1055.700 168v60" stroke="#2062c4" stroke-width="3.300"/>
<path d="M1055.500 143.700l12.900 26.300h-25.800z" fill="#2062c4"/>
<circle cx="1055" cy="253.400" r="27.700" fill="#2062c4"/>
</svg>
<span class="t" style="left:440.0px;top:43.0px;font-size:23px;color:#fff;font-weight:700;">1</span>
<span class="t" style="left:1048.3px;top:242.0px;font-size:23px;color:#fff;font-weight:700;">2</span>
</div>
</body></html>
